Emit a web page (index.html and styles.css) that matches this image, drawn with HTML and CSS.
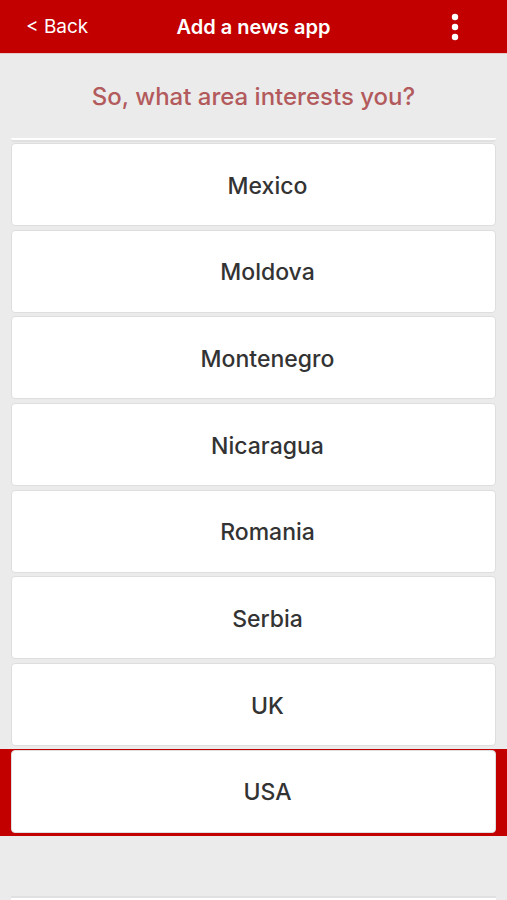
FILE: index.html
```html
<!DOCTYPE html>
<html lang="en">
  <head>
    <meta charset="UTF-8" />
    <meta name="viewport" content="width=device-width, initial-scale=1.0" />
    <title>Add a news app</title>
    <link rel="stylesheet" href="styles.css">
  </head>
  <body>
    <div class="app">
      <div class="topbar">
        <a class="back-btn" href="#">&lt; Back</a>
        <h1>Add a news app</h1>
        <button class="menu-btn" aria-label="More">
          <svg width="12" height="30" viewBox="0 0 12 30">
            <circle cx="6" cy="5" r="3.2" fill="#fff" />
            <circle cx="6" cy="15" r="3.2" fill="#fff" />
            <circle cx="6" cy="25" r="3.2" fill="#fff" />
          </svg>
        </button>
      </div>

      <h2 class="question">So, what area interests you?</h2>

      <div class="area-list">
        <div class="peek peek-top"></div>
        <div class="area-row"><div class="area-card">Mexico</div></div>
        <div class="area-row"><div class="area-card">Moldova</div></div>
        <div class="area-row"><div class="area-card">Montenegro</div></div>
        <div class="area-row"><div class="area-card">Nicaragua</div></div>
        <div class="area-row"><div class="area-card">Romania</div></div>
        <div class="area-row"><div class="area-card">Serbia</div></div>
        <div class="area-row"><div class="area-card">UK</div></div>
        <div class="area-row selected"><div class="area-card">USA</div></div>
        <div class="peek peek-bottom"></div>
      </div>
    </div>
  </body>
</html>
```

FILE: styles.css
```css
body {
  margin: 0;
  font-family: Inter, "Liberation Sans", sans-serif;
  background-color: #ebebeb;
  color: #333;
}
.app {
  height: 900px;
  overflow: hidden;
}
.topbar {
  height: 53px;
  background-color: #c20000;
  color: white;
  display: grid;
  grid-template-columns: 1fr auto 1fr;
  align-items: center;
  padding: 0 46px 0 26px;
  border-bottom: 1px solid #e4c9c9;
}
.topbar h1 {
  margin: 0 0 0 20px;
  font-size: 20px;
  font-weight: 600;
}
.back-btn {
  color: white;
  text-decoration: none;
  font-size: 19px;
  font-weight: 400;
  justify-self: start;
}
.menu-btn {
  background: none;
  border: none;
  padding: 0;
  display: flex;
  justify-self: end;
}
.question {
  margin: 0;
  padding-top: 28px;
  height: 56px;
  text-align: center;
  font-size: 24px;
  font-weight: 500;
  color: #b25a5c;
}
.peek {
  margin: 0 11px;
  background-color: white;
}
.peek-top {
  height: 2px;
  border-bottom: 2px solid #e0e0e0;
  border-radius: 0 0 3px 3px;
}
.peek-bottom {
  margin-top: 60px;
  height: 4px;
  border-top: 2px solid #e0e0e0;
}
.area-row {
  padding: 1px 11px 2.7px;
}
.area-row.selected {
  background-color: #c20000;
}
.area-card {
  height: 83px;
  box-sizing: border-box;
  padding: 2px 0 0 28px;
  background-color: white;
  border: 1px solid #dedede;
  border-radius: 4px;
  display: flex;
  align-items: center;
  justify-content: center;
  font-size: 23px;
  font-weight: 500;
  color: #333;
}
```
